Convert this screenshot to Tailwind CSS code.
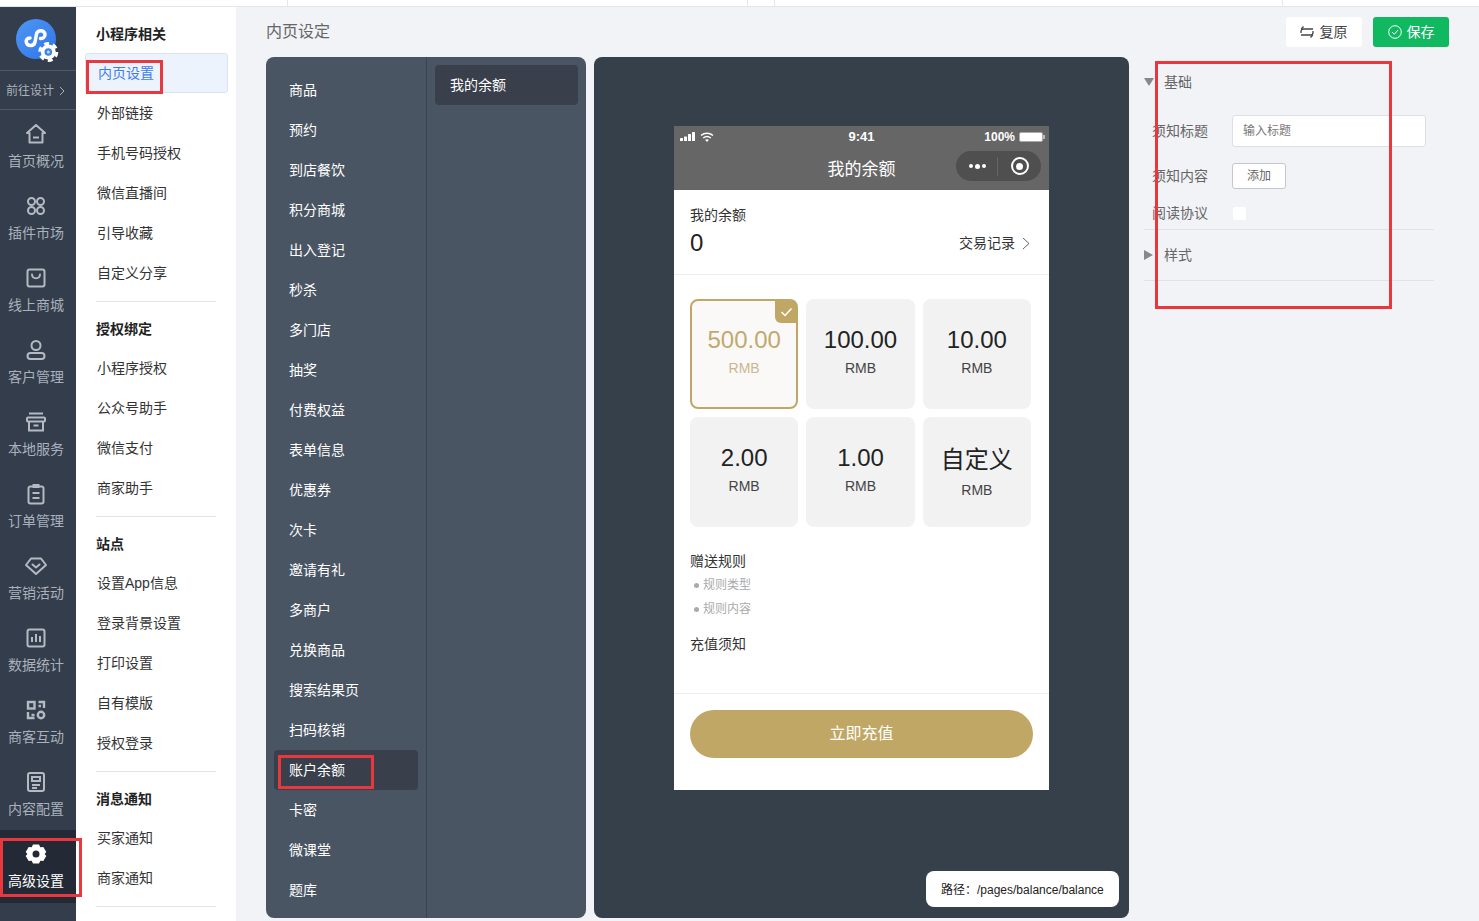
<!DOCTYPE html>
<html lang="zh-CN">
<head>
  <meta charset="UTF-8">
  <title>内页设定</title>
  <script src="https://cdn.jsdelivr.net/npm/@tailwindcss/browser@4"></script>
</head>
<body class="bg-[#f2f3f7] font-['Liberation_Sans','Noto_Sans_CJK_SC',sans-serif] text-[#333]">
<div class="relative w-[1479px] h-[921px] overflow-hidden flex flex-col">

  <!-- top strip -->
  <div class="h-[7px] shrink-0 bg-white border-b border-[#e4e6ea] flex">
    <div class="w-[288px] border-r border-[#e4e6ea]"></div>
    <div class="w-[460px] border-r border-[#e4e6ea]"></div>
    <div class="w-[27px] border-r border-[#e4e6ea]"></div>
    <div class="w-[508px] border-r border-[#e4e6ea]"></div>
  </div>

  <div class="flex flex-1 min-h-0">
    <!-- icon nav -->
    <nav class="w-[76px] shrink-0 bg-[#333d4b] text-[#aab1bc] text-sm">
      <div class="h-[63px] flex items-center justify-center pr-1 pt-[1px]">
        <svg class="overflow-visible" width="46" height="46" viewBox="0 0 46 46">
          <defs><linearGradient id="lg" x1="0" y1="0" x2="1" y2="1"><stop offset="0" stop-color="#4f97f5"/><stop offset="1" stop-color="#2f74e6"/></linearGradient></defs>
          <circle cx="23" cy="23" r="20" fill="url(#lg)"/>
          <path d="M17 22C14 22 12.500 24.500 13.500 27c1.500 3.500 7.500 3.500 8.500-1l1.500-8c1-4.500 7.500-4.500 8.500 0 .5 2.500-2 5-4.500 4.500" fill="none" stroke="#fff" stroke-width="3.500" stroke-linecap="round"/>
          <circle cx="35.300" cy="36" r="7.500" fill="#fff"/>
          <circle cx="35.300" cy="36" r="8.500" fill="none" stroke="#fff" stroke-width="3" stroke-dasharray="4.900 4"/>
          <circle cx="35.300" cy="36" r="3.800" fill="#3d84ec"/>
          <circle cx="35.300" cy="36" r="1.500" fill="#c9dcf8"/>
        </svg>
      </div>
      <div class="h-10 border-y border-[#4e5866] flex items-center justify-center pr-[5px] pt-[1px] text-xs gap-[5px]">前往设计
        <svg width="6" height="10" viewBox="0 0 6 10"><path d="M1 1l4 4-4 4" fill="none" stroke="#aab1bc" stroke-width="1"/></svg>
      </div>

      <a class="h-[72px] flex flex-col items-center pt-3 pr-1">
        <svg class="w-6 h-6" viewBox="0 0 24 24" fill="none" stroke="#b3bac4" stroke-width="2" stroke-linejoin="round"><path d="M12 3l9 8h-2.500v9.500h-13V11H3z"/><path d="M9 15.500h6"/></svg>
        <span class="mt-[5px] leading-5">首页概况</span>
      </a>
      <a class="h-[72px] flex flex-col items-center pt-3 pr-1">
        <svg class="w-6 h-6" viewBox="0 0 24 24" fill="none" stroke="#b3bac4" stroke-width="2"><circle cx="7.500" cy="7.500" r="3.500"/><circle cx="16.500" cy="7.500" r="3.500"/><circle cx="7.500" cy="16.500" r="3.500"/><circle cx="16.500" cy="16.500" r="3.500"/></svg>
        <span class="mt-[5px] leading-5">插件市场</span>
      </a>
      <a class="h-[72px] flex flex-col items-center pt-3 pr-1">
        <svg class="w-6 h-6" viewBox="0 0 24 24" fill="none" stroke="#b3bac4" stroke-width="2"><rect x="3.500" y="3.500" width="17" height="17" rx="2"/><path d="M8 8.500c.5 5 7.500 5 8 0" stroke-linecap="round"/></svg>
        <span class="mt-[5px] leading-5">线上商城</span>
      </a>
      <a class="h-[72px] flex flex-col items-center pt-3 pr-1">
        <svg class="w-6 h-6" viewBox="0 0 24 24" fill="none" stroke="#b3bac4" stroke-width="2"><circle cx="12" cy="7.500" r="4.500"/><rect x="3.500" y="15" width="17" height="6" rx="3"/></svg>
        <span class="mt-[5px] leading-5">客户管理</span>
      </a>
      <a class="h-[72px] flex flex-col items-center pt-3 pr-1">
        <svg class="w-6 h-6" viewBox="0 0 24 24" fill="none" stroke="#b3bac4" stroke-width="2"><path d="M5 3.500h14"/><rect x="3" y="7.500" width="18" height="4" rx="1"/><path d="M5 11.500v9h14v-9"/><path d="M9.500 15.500h5"/></svg>
        <span class="mt-[5px] leading-5">本地服务</span>
      </a>
      <a class="h-[72px] flex flex-col items-center pt-3 pr-1">
        <svg class="w-6 h-6" viewBox="0 0 24 24" fill="none" stroke="#b3bac4" stroke-width="2"><rect x="4.500" y="4.500" width="15" height="17" rx="2"/><rect x="9" y="2.500" width="6" height="3" fill="#b3bac4" stroke-width="1"/><path d="M8.500 11h7M8.500 16h7"/></svg>
        <span class="mt-[5px] leading-5">订单管理</span>
      </a>
      <a class="h-[72px] flex flex-col items-center pt-3 pr-1">
        <svg class="w-6 h-6" viewBox="0 0 24 24" fill="none" stroke="#b3bac4" stroke-width="2" stroke-linejoin="round"><path d="M7 4.500h10l5 6.500-10 9L2 11z"/><path d="M8.500 10.500l3.500 3 3.500-3" stroke-linecap="round"/></svg>
        <span class="mt-[5px] leading-5">营销活动</span>
      </a>
      <a class="h-[72px] flex flex-col items-center pt-3 pr-1">
        <svg class="w-6 h-6" viewBox="0 0 24 24" fill="none" stroke="#b3bac4" stroke-width="2"><rect x="3.500" y="3.500" width="17" height="17" rx="2"/><path d="M8 11v5M12 8v8M16 10v6"/></svg>
        <span class="mt-[5px] leading-5">数据统计</span>
      </a>
      <a class="h-[72px] flex flex-col items-center pt-3 pr-1">
        <svg class="w-6 h-6" viewBox="0 0 24 24" fill="none" stroke="#b3bac4" stroke-width="2.400"><rect x="4" y="4" width="6.500" height="6.500"/><path d="M14.500 4H20v6M14.500 8H17"/><path d="M4 14v6h6.500M7.500 17h3"/><circle cx="17" cy="17" r="3.200"/></svg>
        <span class="mt-[5px] leading-5">商客互动</span>
      </a>
      <a class="h-[72px] flex flex-col items-center pt-3 pr-1">
        <svg class="w-6 h-6" viewBox="0 0 24 24" fill="none" stroke="#b3bac4" stroke-width="2"><rect x="4" y="3" width="16" height="18" rx="2"/><rect x="8" y="7" width="8" height="4"/><path d="M8 15h8M8 18h5"/></svg>
        <span class="mt-[5px] leading-5">内容配置</span>
      </a>
      <a class="h-[73px] flex flex-col items-center pt-3 pr-1 bg-[#232a35] text-white">
        <svg class="w-6 h-6" viewBox="0 0 24 24"><path fill-rule="evenodd" fill="#fff" d="M9 2.500h6l1.300 2.700 3-.2 3 5-1.700 2 1.700 2-3 5-3-.2L15 21.500H9l-1.300-2.700-3 .2-3-5 1.700-2-1.700-2 3-5 3 .2zM12 8.500a3.500 3.500 0 1 0 0 7 3.500 3.500 0 0 0 0-7z"/></svg>
        <span class="mt-[5px] leading-5">高级设置</span>
      </a>
    </nav>

    <!-- sub nav -->
    <aside class="w-[160px] shrink-0 bg-white text-sm pl-[9px] pr-[8px] pt-[6px]">
      <h3 class="h-10 flex items-center pl-[11px] pt-[1px] font-bold text-[#222]">小程序相关</h3>
      <ul>
        <li class="h-10 flex items-center pl-[12px] bg-[#edf3fd] border border-[#d8e4f6] rounded-[3px] text-[#3d7ded]">内页设置</li>
        <li class="h-10 flex items-center pl-[12px]">外部链接</li>
        <li class="h-10 flex items-center pl-[12px]">手机号码授权</li>
        <li class="h-10 flex items-center pl-[12px]">微信直播间</li>
        <li class="h-10 flex items-center pl-[12px]">引导收藏</li>
        <li class="h-10 flex items-center pl-[12px]">自定义分享</li>
      </ul>
      <div class="ml-[11px] mr-[12px] mt-[8px] border-t border-[#e2e4e8]"></div>
      <h3 class="h-10 mt-[7px] flex items-center pl-[11px] font-bold text-[#222]">授权绑定</h3>
      <ul class="-mt-[1px]">
        <li class="h-10 flex items-center pl-[12px]">小程序授权</li>
        <li class="h-10 flex items-center pl-[12px]">公众号助手</li>
        <li class="h-10 flex items-center pl-[12px]">微信支付</li>
        <li class="h-10 flex items-center pl-[12px]">商家助手</li>
      </ul>
      <div class="ml-[11px] mr-[12px] mt-[8px] border-t border-[#e2e4e8]"></div>
      <h3 class="h-10 mt-[7px] flex items-center pl-[11px] font-bold text-[#222]">站点</h3>
      <ul class="-mt-[1px]">
        <li class="h-10 flex items-center pl-[12px]">设置App信息</li>
        <li class="h-10 flex items-center pl-[12px]">登录背景设置</li>
        <li class="h-10 flex items-center pl-[12px]">打印设置</li>
        <li class="h-10 flex items-center pl-[12px]">自有模版</li>
        <li class="h-10 flex items-center pl-[12px]">授权登录</li>
      </ul>
      <div class="ml-[11px] mr-[12px] mt-[8px] border-t border-[#e2e4e8]"></div>
      <h3 class="h-10 mt-[7px] flex items-center pl-[11px] font-bold text-[#222]">消息通知</h3>
      <ul class="-mt-[1px]">
        <li class="h-10 flex items-center pl-[12px]">买家通知</li>
        <li class="h-10 flex items-center pl-[12px]">商家通知</li>
      </ul>
      <div class="ml-[11px] mr-[12px] mt-[8px] border-t border-[#e2e4e8]"></div>
    </aside>

    <!-- main -->
    <main class="flex-1 min-w-0 pl-[30px] flex flex-col">
      <div class="h-[50px] shrink-0 flex pt-[10px] justify-between pr-[30px]">
        <h2 class="text-base text-[#666] leading-[30px]">内页设定</h2>
        <div class="flex gap-[11px]">
          <button class="w-[76px] h-[30px] bg-white rounded-[3px] text-sm text-[#444] flex items-center justify-center gap-[6px] pr-[1px]">
            <svg width="14" height="14" viewBox="0 0 14 14" fill="none" stroke="#444" stroke-width="1.300"><path d="M13 4H3.500C2 4 1 5 1 6.500V8"/><path d="M3.500 1.500L1.200 4"/><path d="M1 10h9.500C12 10 13 9 13 7.500V6"/><path d="M10.500 12.500L12.800 10"/></svg>
            复原
          </button>
          <button class="w-[76px] h-[30px] bg-[#10b860] rounded-[3px] text-sm text-white flex items-center justify-center gap-[5px]">
            <svg width="14" height="14" viewBox="0 0 14 14" fill="none" stroke="#fff" stroke-width="1"><circle cx="7" cy="7" r="6.300"/><path d="M4 7l2.300 2.300L10 5"/></svg>
            保存
          </button>
        </div>
      </div>

      <div class="flex-1 flex gap-2 min-h-0">
        <!-- page type panel -->
        <section class="w-[320px] h-[861px] shrink-0 rounded-lg bg-[#4a5564] flex text-sm text-white">
          <ul class="w-[161px] shrink-0 border-r border-[#3a4350] px-2 pt-[13px]">
            <li class="h-10 flex items-center pl-[15px]">商品</li>
            <li class="h-10 flex items-center pl-[15px]">预约</li>
            <li class="h-10 flex items-center pl-[15px]">到店餐饮</li>
            <li class="h-10 flex items-center pl-[15px]">积分商城</li>
            <li class="h-10 flex items-center pl-[15px]">出入登记</li>
            <li class="h-10 flex items-center pl-[15px]">秒杀</li>
            <li class="h-10 flex items-center pl-[15px]">多门店</li>
            <li class="h-10 flex items-center pl-[15px]">抽奖</li>
            <li class="h-10 flex items-center pl-[15px]">付费权益</li>
            <li class="h-10 flex items-center pl-[15px]">表单信息</li>
            <li class="h-10 flex items-center pl-[15px]">优惠券</li>
            <li class="h-10 flex items-center pl-[15px]">次卡</li>
            <li class="h-10 flex items-center pl-[15px]">邀请有礼</li>
            <li class="h-10 flex items-center pl-[15px]">多商户</li>
            <li class="h-10 flex items-center pl-[15px]">兑换商品</li>
            <li class="h-10 flex items-center pl-[15px]">搜索结果页</li>
            <li class="h-10 flex items-center pl-[15px]">扫码核销</li>
            <li class="h-10 flex items-center pl-[15px] bg-[#39404c] rounded-[4px]">账户余额</li>
            <li class="h-10 flex items-center pl-[15px]">卡密</li>
            <li class="h-10 flex items-center pl-[15px]">微课堂</li>
            <li class="h-10 flex items-center pl-[15px]">题库</li>
          </ul>
          <ul class="flex-1 px-2 pt-2">
            <li class="h-10 flex items-center pl-[15px] bg-[#39404c] rounded-[4px]">我的余额</li>
          </ul>
        </section>

        <!-- preview -->
        <section class="relative w-[535px] h-[861px] shrink-0 rounded-lg bg-[#36404b] pt-[69px] pl-[80px]">
          <div class="w-[375px] h-[664px] bg-white flex flex-col">
            <div class="h-[64px] shrink-0 bg-[#666] text-white">
              <div class="h-[20px] relative flex items-center justify-between pl-[6px] pr-[4px] pt-[1px]">
                <div class="flex items-center gap-[3px]">
                  <svg width="17" height="9" viewBox="0 0 17 9" fill="#fff"><rect x="0" y="6" width="3" height="3" rx=".5"/><rect x="4" y="4.500" width="3" height="4.500" rx=".5"/><rect x="8" y="2" width="3" height="7" rx=".5"/><rect x="12" y="0" width="3" height="9" rx=".5"/></svg>
                  <svg width="14" height="10" viewBox="0 0 14 10" fill="none" stroke="#fff" stroke-width="1.500"><path d="M1 3.500c3.500-3 8.500-3 12 0"/><path d="M3.200 6c2.200-1.800 5.400-1.800 7.600 0"/><path d="M7 10L5 7.800c1.300-.8 2.700-.8 4 0z" fill="#fff" stroke="none"/></svg>
                </div>
                <span class="absolute left-0 right-0 text-center text-[13px] font-bold">9:41</span>
                <div class="flex items-center gap-[4px] text-xs font-bold">100%
                  <span class="flex items-center">
                    <span class="w-[24px] h-[10px] rounded-[2px] bg-white border border-[#aaa] block"></span>
                    <span class="w-[2px] h-[4px] bg-[#bbb] block"></span>
                  </span>
                </div>
              </div>
              <div class="h-[44px] relative flex items-center justify-center pt-[3px]">
                <span class="text-[17px]">我的余额</span>
                <div class="absolute left-[282px] top-[5px] w-[85px] h-[30px] rounded-full bg-[#4f4f4f] flex items-center">
                  <div class="w-[42px] h-[19px] border-r border-[#666] flex items-center justify-center gap-[2px] pl-[2px]">
                    <i class="w-[4px] h-[4px] rounded-full bg-white"></i>
                    <i class="w-[5px] h-[5px] rounded-full bg-white"></i>
                    <i class="w-[4px] h-[4px] rounded-full bg-white"></i>
                  </div>
                  <div class="flex-1 flex justify-center">
                    <div class="w-[18px] h-[18px] rounded-full border-[2px] border-white flex items-center justify-center"><i class="w-[7px] h-[7px] rounded-full bg-white"></i></div>
                  </div>
                </div>
              </div>
            </div>

            <div class="h-[85px] shrink-0 border-b border-[#eee] px-4 pt-[15px] text-[#333]">
              <p class="text-sm leading-5">我的余额</p>
              <div class="flex items-center justify-between h-[36px]">
                <span class="text-[24px] text-[#222]">0</span>
                <span class="flex items-center gap-[7px] text-sm pr-[3px]">交易记录
                  <svg width="8" height="13" viewBox="0 0 8 13" fill="none" stroke="#666" stroke-width="1"><path d="M1 1l6 5.500L1 12"/></svg>
                </span>
              </div>
            </div>

            <div class="grid grid-cols-3 gap-2 pl-4 pr-[18px] pt-[24px]">
              <div class="relative h-[110px] rounded-[8px] border-2 border-[#c0a765] bg-[#fbf9f7] flex flex-col items-center text-[#c0a96f] pt-[23px]">
                <span class="text-[24px] leading-8">500.00</span>
                <span class="text-[14px] leading-5 mt-[2px] text-[#c8b88f]">RMB</span>
                <span class="absolute -top-[1px] -right-[1px] w-[22px] h-[23px] bg-[#c0a765] rounded-tr-[7px] rounded-bl-[6px] flex items-center justify-center">
                  <svg width="13" height="10" viewBox="0 0 13 10" fill="none" stroke="#fff" stroke-width="1.500"><path d="M1.500 5l3.500 3.500 6.500-7"/></svg>
                </span>
              </div>
              <div class="h-[110px] rounded-[8px] bg-[#f2f2f2] flex flex-col items-center pt-[25px] text-[#222]">
                <span class="text-[24px] leading-8">100.00</span>
                <span class="text-[14px] leading-5 mt-[2px] text-[#444]">RMB</span>
              </div>
              <div class="h-[110px] rounded-[8px] bg-[#f2f2f2] flex flex-col items-center pt-[25px] text-[#222]">
                <span class="text-[24px] leading-8">10.00</span>
                <span class="text-[14px] leading-5 mt-[2px] text-[#444]">RMB</span>
              </div>
              <div class="h-[110px] rounded-[8px] bg-[#f2f2f2] flex flex-col items-center pt-[25px] text-[#222]">
                <span class="text-[24px] leading-8">2.00</span>
                <span class="text-[14px] leading-5 mt-[2px] text-[#444]">RMB</span>
              </div>
              <div class="h-[110px] rounded-[8px] bg-[#f2f2f2] flex flex-col items-center pt-[25px] text-[#222]">
                <span class="text-[24px] leading-8">1.00</span>
                <span class="text-[14px] leading-5 mt-[2px] text-[#444]">RMB</span>
              </div>
              <div class="h-[110px] rounded-[8px] bg-[#f2f2f2] flex flex-col items-center pt-[25px] text-[#222]">
                <span class="text-[24px] leading-9">自定义</span>
                <span class="text-[14px] leading-5 mt-[2px] text-[#444]">RMB</span>
              </div>
            </div>

            <div class="px-4 pt-[24px] h-[167px] shrink-0 border-b border-[#eee]">
              <p class="text-sm leading-5">赠送规则</p>
              <p class="text-xs leading-6 text-[#aaa] flex items-center pl-1 gap-[4px] mt-[2px]"><i class="w-[5px] h-[5px] rounded-full bg-[#aaa]"></i>规则类型</p>
              <p class="text-xs leading-6 text-[#aaa] flex items-center pl-1 gap-[4px]"><i class="w-[5px] h-[5px] rounded-full bg-[#aaa]"></i>规则内容</p>
              <p class="text-sm leading-5 mt-[13px]">充值须知</p>
            </div>

            <div class="px-4 pt-4">
              <button class="w-[343px] h-12 rounded-full bg-[#c0a765] text-white text-base">立即充值</button>
            </div>
          </div>
          <div class="absolute right-[10px] bottom-[11px] w-[193px] h-[36px] rounded-lg bg-white text-xs text-[#222] flex items-center pl-[15px] pt-[1px]">路径：/pages/balance/balance</div>
        </section>

        <!-- settings -->
        <section class="w-[290px] shrink-0 ml-[7px] text-sm text-[#666]">
          <div class="h-[50px] flex items-center gap-[10px]">
            <svg width="10" height="8" viewBox="0 0 10 8" fill="#888"><path d="M0 0h10L5 8z"/></svg>
            <span>基础</span>
          </div>
          <div class="flex items-center h-[32px] mt-[8px] pl-2">
            <span class="w-[80px]">须知标题</span>
            <div class="w-[194px] h-[32px] bg-white border border-[#dcdfe6] rounded-[3px] text-xs text-[#777] flex items-center pl-[10px]">输入标题</div>
          </div>
          <div class="flex items-center h-[26px] mt-[16px] pl-2">
            <span class="w-[80px]">须知内容</span>
            <div class="w-[54px] h-[26px] bg-white border border-[#c4c7cc] rounded-[3px] text-xs text-[#666] flex items-center justify-center">添加</div>
          </div>
          <div class="flex items-center h-[14px] mt-[17px] pl-2">
            <span class="w-[81px]">阅读协议</span>
            <div class="w-[13px] h-[13px] bg-white rounded-[2px]"></div>
          </div>
          <div class="border-t border-[#e0e2e6] mt-[9px]"></div>
          <div class="h-[51px] flex items-center gap-[11px] border-b border-[#e0e2e6]">
            <svg width="9" height="10" viewBox="0 0 9 10" fill="#888"><path d="M0 0l9 5-9 5z"/></svg>
            <span>样式</span>
          </div>
        </section>
      </div>
    </main>
  </div>

  <!-- red annotation boxes -->
  <div class="absolute left-0 top-[838px] w-[82px] h-[59px] border-[3px] border-[#e8383d]"></div>
  <div class="absolute left-[86px] top-[60px] w-[77px] h-[34px] border-[3px] border-[#e8383d]"></div>
  <div class="absolute left-[278px] top-[755px] w-[96px] h-[34px] border-[3px] border-[#e8383d]"></div>
  <div class="absolute left-[1155px] top-[61px] w-[237px] h-[248px] border-[3px] border-[#e8383d]"></div>
</div>
</body>
</html>
